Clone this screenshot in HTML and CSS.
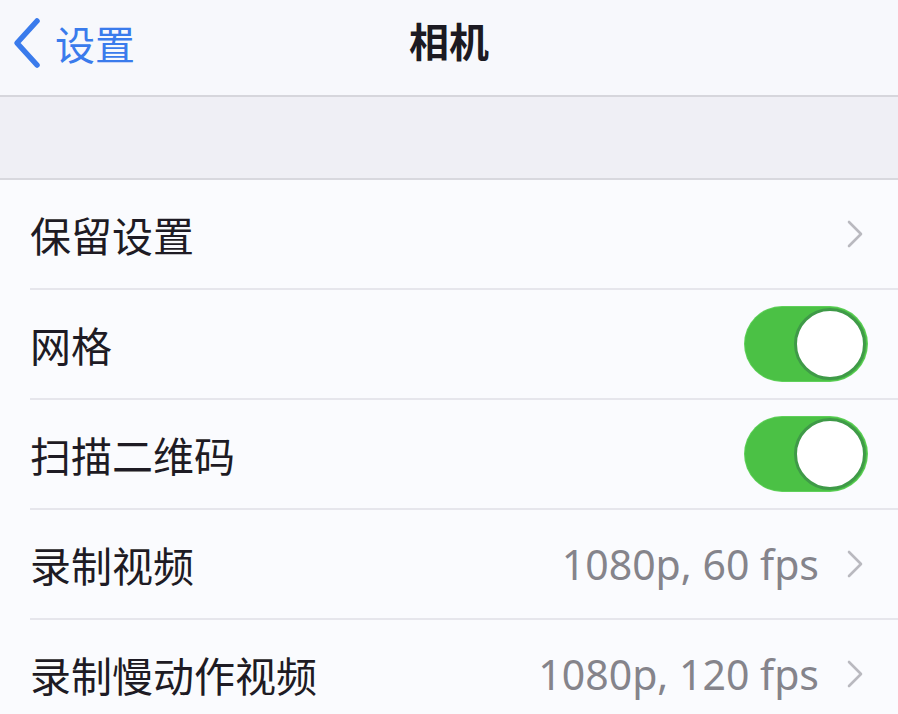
FILE: index.html
```html
<!DOCTYPE html>
<html lang="zh">
<head>
<meta charset="utf-8">
<link rel="stylesheet" href="styles.css">
</head>
<body>
<header class="nav">
  <div class="back">
    <svg class="back-icon" width="30" height="52" viewBox="0 0 30 52"><polyline points="25,4 5,26 25,48" fill="none" stroke="#3a7bec" stroke-width="5.5" stroke-linecap="round" stroke-linejoin="round"/></svg>
    <span class="back-text">设置</span>
  </div>
  <div class="title">相机</div>
</header>
<div class="band"></div>
<ul class="list">
  <li class="row"><span class="label">保留设置</span><span class="right"><svg class="chev" width="16" height="28" viewBox="0 0 16 28"><polyline points="2,2 14,14 2,26" fill="none" stroke="#b9b9bf" stroke-width="2.6" stroke-linecap="round" stroke-linejoin="round"/></svg></span></li>
  <li class="row"><span class="label">网格</span><span class="toggle"><span class="knob"></span></span></li>
  <li class="row"><span class="label">扫描二维码</span><span class="toggle"><span class="knob"></span></span></li>
  <li class="row"><span class="label">录制视频</span><span class="right"><span class="value">1080p, 60 fps</span><svg class="chev" width="16" height="28" viewBox="0 0 16 28"><polyline points="2,2 14,14 2,26" fill="none" stroke="#b9b9bf" stroke-width="2.6" stroke-linecap="round" stroke-linejoin="round"/></svg></span></li>
  <li class="row"><span class="label">录制慢动作视频</span><span class="right"><span class="value">1080p, 120 fps</span><svg class="chev" width="16" height="28" viewBox="0 0 16 28"><polyline points="2,2 14,14 2,26" fill="none" stroke="#b9b9bf" stroke-width="2.6" stroke-linecap="round" stroke-linejoin="round"/></svg></span></li>
</ul>
</body>
</html>
```
FILE: styles.css
```css
html, body {
  margin: 0;
  padding: 0;
}
body {
  background: #fafbfe;
  font-family: "Noto Sans", "Noto Sans CJK SC", sans-serif;
  color: #1c1a22;
  width: 898px;
  height: 714px;
  overflow: hidden;
}
.nav {
  position: relative;
  height: 95px;
  background: #f7f8fc;
  border-bottom: 2px solid #d6d6dc;
  display: flex;
  align-items: center;
}
.back {
  display: flex;
  align-items: center;
  padding-left: 12px;
  gap: 13px;
  margin-top: -10px;
}
.back-text {
  font-family: "Noto Sans CJK SC", sans-serif;
  font-size: 40px;
  color: #3a7bec;
  line-height: 1;
}
.title {
  position: absolute;
  left: 0;
  right: 0;
  top: 20px;
  text-align: center;
  font-family: "Noto Sans CJK SC", sans-serif;
  font-size: 40px;
  font-weight: 700;
  line-height: 1;
  color: #1c1a22;
}
.band {
  height: 81px;
  background: #efeff5;
  border-bottom: 2px solid #d8d8de;
}
.list {
  list-style: none;
  margin: 0;
  padding: 0 0 0 30px;
}
.row {
  height: 108px;
  display: flex;
  align-items: center;
  justify-content: space-between;
  border-bottom: 2px solid #e6e6ec;
  padding-right: 30px;
}
.row:last-child {
  border-bottom: none;
}
.label {
  font-family: "Noto Sans CJK SC", sans-serif;
  font-size: 41px;
  line-height: 1;
  color: #1e1b24;
}
.right {
  display: flex;
  align-items: center;
  gap: 28px;
  padding-right: 5px;
}
.value {
  font-family: "Noto Sans", sans-serif;
  font-size: 41px;
  color: #85848b;
  line-height: 1;
}
.chev {
  display: block;
}
.toggle {
  position: relative;
  width: 122px;
  height: 74px;
  border-radius: 37px;
  background: #4bc145;
  box-shadow: 0 0 0 1px #5fd05a;
  margin-right: 1px;
}
.knob {
  position: absolute;
  right: 1px;
  top: 1px;
  width: 72px;
  height: 72px;
  border-radius: 50%;
  background: #ffffff;
  border: 3px solid #3f9a48;
  box-sizing: border-box;
}
```
